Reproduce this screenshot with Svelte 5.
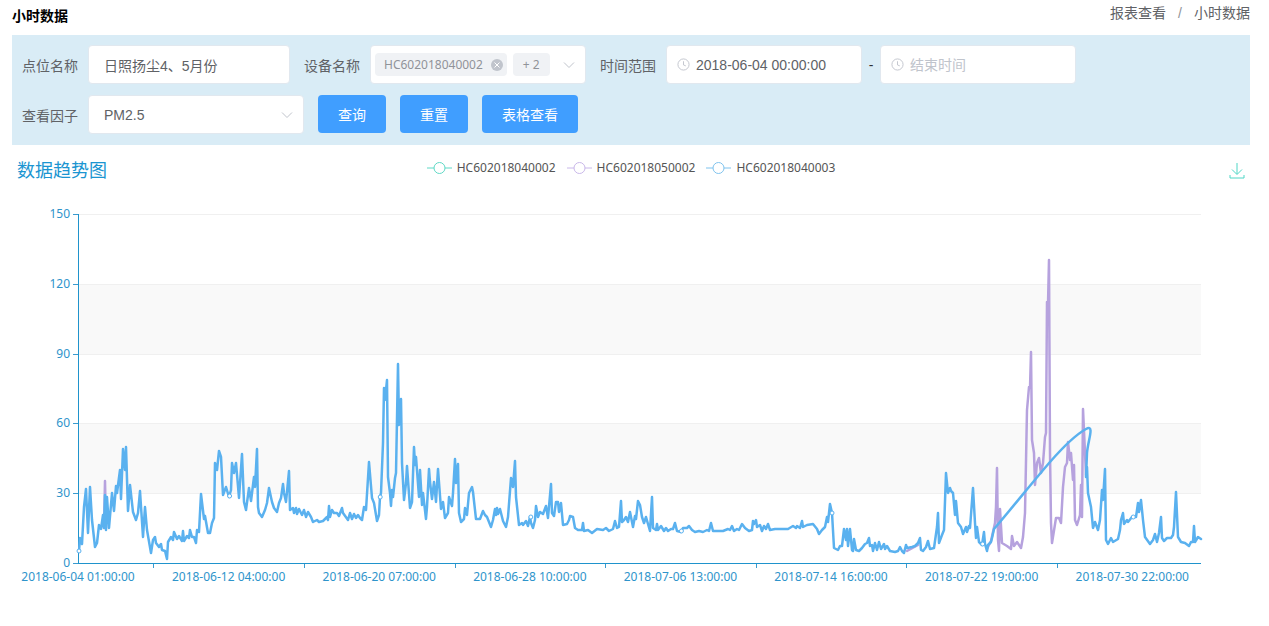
<script lang="ts">
  let pointName = $state('日照扬尘4、5月份');
  let startTime = $state('2018-06-04 00:00:00');
  let endTime = $state('');
  let factor = $state('PM2.5');

  const legend = [
    { name: 'HC602018040002', color: '#5fd9c6' },
    { name: 'HC602018050002', color: '#c9b8ea' },
    { name: 'HC602018040003', color: '#7fc3ee' },
  ];

  const yLabels = [150, 120, 90, 60, 30, 0];
  const xLabels = [
    '2018-06-04 01:00:00',
    '2018-06-12 04:00:00',
    '2018-06-20 07:00:00',
    '2018-06-28 10:00:00',
    '2018-07-06 13:00:00',
    '2018-07-14 16:00:00',
    '2018-07-22 19:00:00',
    '2018-07-30 22:00:00',
  ];

  // Chart geometry. Series live in their own viewBox and stretch with the plot.
  const left = 66;
  const right = 49;
  const top = 14;
  const plotHeight = 349;
  const bottom = top + plotHeight;
  const view = { x: 78, y: 214, width: 1123 };

  // hourly readings, one label every 195 hours
  const hours = 1454;
  const hoursPerLabel = 195;

  let chartWidth = $state(1200);
  let plotWidth = $derived(Math.max(chartWidth - left - right, 100));
  let step = $derived((plotWidth * hoursPerLabel) / hours);

  const yAt = (i: number) => top + Math.round((plotHeight * i) / 5);

  const mainStart =
    '79,551 80,538 82,544 84,507 86,489 88,533 90,487 92,520 95,547 97,543 99,525 101,529 103,515 104,528 105,495 106,530 107,497 109,528 112,493 114,511 116,486 117,493 120,470 121,499 123,449 125,470 126,447 128,511 130,485 133,512 136,520 138,513 140,491 143,537 145,507 147,530 151,553 153,540 155,537 156,543 159,547 161,544 162,550 165,551 167,559 168,542 171,537 173,540 174,532 177,539 179,536 182,541 183,531 184,541 187,536 189,538 190,530 192,537 194,537 196,543 197,530 199,532 201,494 204,519 205,516 208,533 210,533 212,523 214,518 215,463 217,470 219,451 221,457 223,495 226,487 229,497 231,490 232,463 234,473 236,463 239,498 242,454 244,502 246,510 249,488 251,501 254,477 255,487 257,449 258,507 259,513 262,517 265,510 267,503 269,488 272,502 274,508 277,512 279,503 281,498 283,484 284,493 286,502 289,471 290,510 293,508 294,513 296,508 297,514 299,509 302,515 304,510 306,517 308,512 311,517 313,522 317,520 319,522 323,521 327,517 328,520 329,506 330,517 332,510 334,513 337,513 339,516 342,508 343,513 348,520 350,513 352,519 354,514 356,518 358,515 360,518 362,520 364,507 366,510 369,462 372,498 374,503 377,521 379,515 380,497 381,493 383,443 384,388 385,400 387,380 388,477 390,493 391,506 392,490 393,497 395,478 396,473 398,364 399,425 401,399 402,463 404,500 406,483 407,466 410,508 412,502 414,447 415,465 416,457 419,497 420,470 422,505 423,493 426,519 427,507 429,469 430,482 432,499 434,482 436,502 438,469 441,509 443,502 445,518 448,513 449,497 452,506 453,493 455,459 456,483 458,464 459,513 461,522 464,519 465,508 467,515 469,493 472,487 473,492 476,519 480,519 483,511 485,515 487,517 491,527 493,520 495,509 496,515 497,508 498,514 500,509 503,521 506,527 508,517 511,478 513,487 515,461 516,497 519,525 522,523 523,525 526,521 528,526 530,517 531,523 533,528 535,520 536,506 538,517 540,512 543,514 546,506 548,518 551,484 552,513 554,516 556,502 558,502 559,512 561,503 563,525 567,524 569,520 570,516 573,517 575,528 578,530 582,530 583,523 584,531 588,530 592,533 597,529 603,530 606,528 609,531 613,529 615,521 617,528 619,527 621,501 622,522 624,520 626,517 628,522 630,512 633,527 635,516 636,519 638,501 640,505 642,517 644,523 646,517 650,531 652,497 653,528 656,530 657,524 658,530 661,526 664,531 666,528 668,531 671,529 673,529 675,523 677,531 681,532 683,528 687,528 689,526 692,530 695,532 699,531 703,532 707,530 709,531 711,523 713,531 718,531 723,531 728,529 730,530 732,526 734,531 737,529 739,530 742,524 745,528 749,531 752,530 753,521 754,524 756,520 757,527 760,525 762,531 764,526 766,529 768,524 770,530 775,529 788,529 793,526 796,528 797,526 800,528 802,521 803,527 807,525 813,524 817,529 819,534 822,530 825,527 827,517 828,522 830,504 832,513 834,548 838,550 840,546 842,546 844,529 846,540 847,529 848,546 850,529 852,550 853,551 854,539 856,550 859,551 862,548 865,544 867,543 869,538 870,546 872,545 873,551 875,543 877,550 879,542 881,549 884,544 885,549 887,546 890,551 895,552 898,551 900,547 902,551 904,553 906,545 907,548 912,547 915,546 918,543 920,538 921,550 923,551 926,547 928,541 930,549 934,548 937,527 938,513 939,543 942,535 944,530 946,473 948,493 950,488 951,491 953,493 955,515 956,501 958,523 961,527 963,534 966,527 967,532 969,526 970,528 973,488 975,523 976,538 977,527 979,542 982,545 984,532 985,544 987,551 988,545 991,542 992,538 994,529';
  const mainGap = 'C1012,508 1036,478 1050,462 S1077,434 1086,429 S1088,440 1087,453 L1086,477';
  const mainEnd =
    '1087,467 1088,493 1091,507 1093,528 1095,522 1098,530 1100,520 1102,490 1103,500 1105,469 1106,540 1108,544 1111,538 1113,542 1118,539 1120,530 1121,520 1123,513 1124,524 1127,520 1128,522 1132,517 1136,517 1138,503 1139,512 1141,500 1143,520 1145,537 1150,544 1153,540 1155,534 1157,542 1159,533 1161,517 1162,538 1164,541 1167,538 1171,538 1173,535 1174,527 1176,492 1178,537 1181,542 1185,543 1189,546 1191,542 1193,542 1194,526 1195,542 1198,537 1201,539';
  const mainPath = `M${mainStart} ${mainGap} L${mainEnd}`;
  const secondPath =
    'M104,528 105,481 106,528 M907,551 918,545 M987,549 991,541 995,523 996,507 997,468 998,540 999,551 1000,509 1002,543 1007,546 1011,549 1012,536 1014,546 1017,542 1021,548 1023,537 1025,513 1027,410 1029,387 1030,388 1031,352 1032,440 1034,453 1035,485 1037,463 1039,458 1041,473 1043,463 1045,437 1046,433 1047,302 1048,304 1049,260 1050,453 1051,523 1052,543 1056,518 1059,518 1061,523 1063,487 1065,467 1067,463 1068,442 1070,460 1071,453 1073,480 1074,465 1075,520 1077,525 1080,515 1081,485 1082,517 1083,409 1085,453 1086,475';

  const symbols = [551, 496, 497, 517, 531, 513, 544, 517];
</script>

{#snippet clock()}
  <svg class="clock" viewBox="0 0 14 14" aria-hidden="true">
    <circle cx="7" cy="7" r="6" />
    <path d="M7 3.5V7.5L9.5 8.5" />
  </svg>
{/snippet}

{#snippet chevron()}
  <svg class="chevron" viewBox="0 0 12 12" aria-hidden="true">
    <path d="M1 3.5L6 8.5L11 3.5" />
  </svg>
{/snippet}

<div class="page">
  <header class="page-header">
    <h1>小时数据</h1>
    <nav class="breadcrumb" aria-label="breadcrumb">
      <a href="#report">报表查看</a>
      <span class="slash">/</span>
      <a href="#hour">小时数据</a>
    </nav>
  </header>

  <form class="filters" onsubmit={(e) => e.preventDefault()}>
    <div class="row">
      <div class="field">
        <label for="point">点位名称</label>
        <input id="point" class="box point" type="text" bind:value={pointName} />
      </div>
      <div class="field">
        <label for="device">设备名称</label>
        <div class="box devices">
          <span class="tag">
            HC602018040002
            <button type="button" class="tag-close" aria-label="remove">
              <svg viewBox="0 0 12 12"><path d="M3.5 3.5L8.5 8.5M8.5 3.5L3.5 8.5" /></svg>
            </button>
          </span>
          <span class="tag">+ 2</span>
          <button id="device" type="button" class="toggle">{@render chevron()}</button>
        </div>
      </div>
      <div class="field">
        <label for="start">时间范围</label>
        <div class="box date">
          {@render clock()}
          <input id="start" type="text" bind:value={startTime} />
        </div>
        <span class="dash">-</span>
        <div class="box date">
          {@render clock()}
          <input type="text" aria-label="结束时间" placeholder="结束时间" bind:value={endTime} />
        </div>
      </div>
    </div>
    <div class="row">
      <div class="field">
        <label for="factor">查看因子</label>
        <div class="box factor">
          <select id="factor" bind:value={factor}>
            <option>PM2.5</option>
          </select>
          {@render chevron()}
        </div>
      </div>
      <button class="primary" type="submit">查询</button>
      <button class="primary" type="reset">重置</button>
      <button class="primary" type="button">表格查看</button>
    </div>
  </form>

  <section class="chart">
    <div class="chart-header">
      <h2>数据趋势图</h2>
      <div class="legend">
        {#each legend as item}
          <button type="button" class="legend-item">
            <svg viewBox="0 0 25 14" style:stroke={item.color}>
              <path d="M0 7H25" />
              <circle cx="12.5" cy="7" r="5.5" />
            </svg>
            {item.name}
          </button>
        {/each}
      </div>
      <button type="button" class="download" aria-label="download">
        <svg viewBox="0 0 16 16"><path d="M8 0V11M3 6.5L8 11.5L13 6.5M1 12V15H15V12" /></svg>
      </button>
    </div>

    <div class="canvas" bind:clientWidth={chartWidth}>
      <svg width={chartWidth} height="390">
        <rect class="band" x={left} y={yAt(1)} width={plotWidth} height={yAt(2) - yAt(1)} />
        <rect class="band" x={left} y={yAt(3)} width={plotWidth} height={yAt(4) - yAt(3)} />
        {#each yLabels as label, i}
          {#if i < 5}
            <line class="grid" x1={left} x2={left + plotWidth} y1={yAt(i)} y2={yAt(i)} />
          {/if}
          <line class="axis" x1={left - 5} x2={left} y1={yAt(i)} y2={yAt(i)} />
          <text class="axis-text" x={left - 8} y={yAt(i) + 4} text-anchor="end">{label}</text>
        {/each}
        {#each xLabels as label, i}
          <text class="axis-text" x={left + step * i} y={bottom + 18} text-anchor="middle">{label}</text>
          {#if i < 7}
            <line
              class="axis"
              x1={Math.round(left + step * (i + 0.5))}
              x2={Math.round(left + step * (i + 0.5))}
              y1={bottom}
              y2={bottom + 5}
            />
          {/if}
        {/each}
        <path class="axis main" d="M{left} {top}V{bottom}H{left + plotWidth}" />

        <svg
          x={left}
          y={top}
          width={plotWidth}
          height={plotHeight}
          viewBox="{view.x} {view.y} {view.width} {plotHeight}"
          preserveAspectRatio="none"
          overflow="visible"
        >
          <path class="series second" d={secondPath} />
          <path class="series third" d={mainPath} />
        </svg>
        {#each symbols as y, i}
          <circle class="symbol" cx={left + 1 + step * i} cy={y - view.y + top} r="2" />
        {/each}
      </svg>
    </div>
  </section>
</div>

<style>
  :global(body) {
    background: #fff;
  }
  .page {
    padding: 0 19px 0 12px;
    font-family: "Liberation Sans", "Noto Sans CJK SC", sans-serif;
    font-size: 14px;
    color: #606266;
  }
  button,
  input,
  select {
    font: inherit;
    color: inherit;
    margin: 0;
    padding: 0;
    border: 0;
    background: none;
    outline: none;
  }
  button {
    cursor: pointer;
  }
  svg {
    display: block;
  }
  .page-header {
    display: flex;
    justify-content: space-between;
    height: 35px;
  }
  h1 {
    margin: 0;
    font-size: 14px;
    line-height: 32px;
    font-weight: 700;
    color: #000;
  }
  .breadcrumb {
    display: flex;
    gap: 12px;
    line-height: 26px;
  }
  .breadcrumb a {
    color: #606266;
    text-decoration: none;
  }
  .slash {
    color: #909399;
  }

  .filters {
    display: flex;
    flex-direction: column;
    gap: 12px;
    padding: 10px 10px 11px;
    background: #d9ecf6;
  }
  .row {
    display: flex;
    flex-wrap: wrap;
    gap: 14px;
  }
  .field {
    display: flex;
    align-items: center;
  }
  .field label {
    margin-right: 10px;
  }
  .box {
    display: flex;
    align-items: center;
    box-sizing: border-box;
    height: 39px;
    border: 1px solid #e1e8ef;
    border-radius: 4px;
    background: #fff;
  }
  .point {
    width: 202px;
    padding: 0 15px;
  }
  .devices {
    width: 216px;
    padding: 0 10px 0 4px;
    gap: 6px;
  }
  .tag {
    display: flex;
    align-items: center;
    gap: 8px;
    height: 23px;
    padding: 0 4px 0 9px;
    border-radius: 4px;
    background: #f0f2f5;
    color: #909399;
    font-family: "Noto Sans", sans-serif;
    font-size: 12px;
    white-space: nowrap;
  }
  .tag + .tag {
    padding: 0 10px;
  }
  .tag-close {
    width: 12px;
    height: 12px;
    border-radius: 50%;
    background: #c0c4cc;
  }
  .tag-close path {
    stroke: #fff;
  }
  .toggle {
    margin-left: auto;
  }
  .chevron {
    width: 12px;
    height: 12px;
    fill: none;
    stroke: #c0c4cc;
    pointer-events: none;
  }
  .date {
    width: 196px;
    padding: 0 10px;
    gap: 6px;
  }
  .date input {
    flex: 1;
    min-width: 0;
  }
  .date input::placeholder {
    color: #c0c4cc;
    opacity: 1;
  }
  .clock {
    width: 13px;
    height: 13px;
    fill: none;
    stroke: #c0c4cc;
  }
  .dash {
    width: 18px;
    text-align: center;
    color: #303133;
  }
  .factor {
    width: 216px;
    padding: 0 10px 0 15px;
  }
  .factor select {
    flex: 1;
    height: 36px;
    appearance: none;
  }
  .row + .row {
    margin-top: -1px;
  }
  .primary {
    height: 38px;
    padding: 0 20px;
    border-radius: 4px;
    background: #409eff;
    color: #fff;
  }

  .chart-header {
    display: grid;
    grid-template-columns: 1fr auto 1fr;
    align-items: center;
    height: 51px;
    padding: 0 5px;
  }
  h2 {
    margin: 0;
    font-size: 18px;
    line-height: 24px;
    font-weight: 400;
    color: #1b95d1;
  }
  .legend {
    display: flex;
    gap: 11px;
    padding-bottom: 6px;
  }
  .legend-item {
    display: flex;
    align-items: center;
    gap: 5px;
    font-family: "Noto Sans", sans-serif;
    font-size: 12px;
    line-height: 16px;
    color: #555;
  }
  .legend-item svg {
    width: 25px;
    height: 14px;
    fill: #fff;
  }
  .download {
    justify-self: end;
  }
  .download svg {
    width: 16px;
    height: 16px;
    fill: none;
    stroke: #4fd6c6;
  }
  .canvas {
    padding-top: 4px;
    overflow: hidden;
  }
  .band {
    fill: #f9f9f9;
  }
  .grid {
    stroke: #f0f0f0;
    shape-rendering: crispEdges;
  }
  .axis {
    fill: none;
    stroke: #3a9bcf;
    shape-rendering: crispEdges;
  }
  .axis.main {
    stroke: #1f93cc;
  }
  .axis-text {
    font-family: "Noto Sans", sans-serif;
    font-size: 12px;
    fill: #2e94cb;
  }
  .series {
    fill: none;
    stroke-width: 2.5;
    stroke-linejoin: round;
    stroke-linecap: round;
    vector-effect: non-scaling-stroke;
  }
  .second {
    stroke: #b6a2de;
  }
  .third {
    stroke: #5ab1ef;
  }
  .symbol {
    fill: #fff;
    stroke: #5ab1ef;
  }
</style>
